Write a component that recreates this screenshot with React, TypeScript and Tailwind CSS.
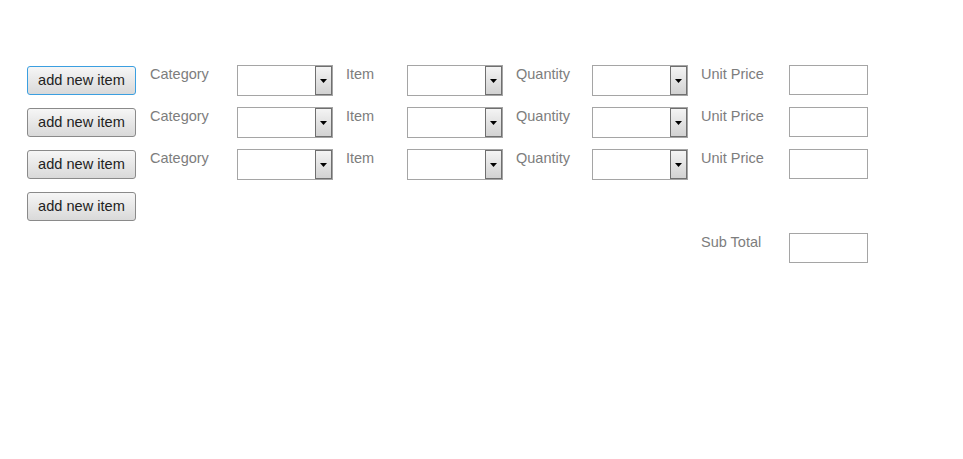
import React from 'react';

function SelectBox() {
  return (
    <div className="flex h-[31px] w-[96px] border border-[#a5a5a5] bg-white">
      <div className="flex-1" />
      <div className="flex w-[17px] items-center justify-center border border-[#6f6f6f] bg-gradient-to-b from-[#f4f4f4] to-[#d2d2d2]">
        <svg width="7" height="4" viewBox="0 0 7 4">
          <path d="M0 0 L7 0 L3.5 4 Z" fill="#000" />
        </svg>
      </div>
    </div>
  );
}

function TextBox() {
  return <div className="h-[30px] w-[79px] border border-[#a5a5a5] bg-white" />;
}

function AddButton({ focused }: { focused?: boolean }) {
  return (
    <button
      className={
        'ml-[27px] mt-[1px] h-[29px] w-[109px] rounded-[3px] border bg-gradient-to-b from-[#f6f6f6] to-[#d9d9d9] text-[14.6px] text-[#222] ' +
        (focused ? 'border-[#3b9fe0]' : 'border-[#8a8a8a]')
      }
    >
      add new item
    </button>
  );
}

function Label({ text, className }: { text: string; className: string }) {
  return <div className={'pt-[1px] text-[14.5px] leading-[16px] text-[#7d7d7d] ' + className}>{text}</div>;
}

function ItemRow({ focused }: { focused?: boolean }) {
  return (
    <div className="flex h-[42px] items-start">
      <AddButton focused={focused} />
      <Label text="Category" className="ml-[14px] w-[87px]" />
      <SelectBox />
      <Label text="Item" className="ml-[13px] w-[61px]" />
      <SelectBox />
      <Label text="Quantity" className="ml-[13px] w-[76px]" />
      <SelectBox />
      <Label text="Unit Price" className="ml-[13px] w-[88px]" />
      <TextBox />
    </div>
  );
}

export default function App() {
  return (
    <div className="h-[459px] w-[963px] bg-white pt-[65px] font-['Liberation_Sans',Arial,sans-serif]">
      <ItemRow focused />
      <ItemRow />
      <ItemRow />
      <div className="flex h-[42px] items-start">
        <AddButton />
      </div>
      <div className="flex h-[42px] items-start">
        <Label text="Sub Total" className="ml-[701px] w-[88px]" />
        <TextBox />
      </div>
    </div>
  );
}
